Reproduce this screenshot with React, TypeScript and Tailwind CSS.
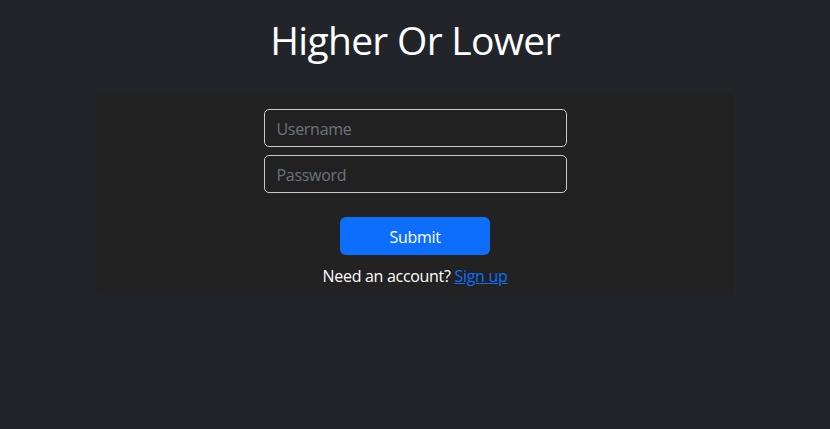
export default function App() {
  return (
    <div className="min-h-[429px] w-full bg-[#212529] text-white" style={{ fontFamily: '"Segoe UI", "Open Sans", "Noto Sans", sans-serif' }}>
      <h1 className="pt-[16px] text-center text-[39px] leading-[48px] font-normal tracking-[-0.7px]">Higher Or Lower</h1>
      <div className="mx-auto mt-[29px] w-[638px] rounded-[5px] bg-[#222222] px-4 pt-4 pb-[7px]">
        <div className="mx-auto flex w-[303px] flex-col gap-[8px]">
          <input
            placeholder="Username"
            className="h-[38px] w-full rounded-[5px] border border-[#c8cbce] bg-[#212121] px-3 pt-[2px] text-[16px] tracking-[-0.3px] text-white placeholder:text-[#6c757d] outline-none"
          />
          <input
            type="password"
            placeholder="Password"
            className="h-[38px] w-full rounded-[5px] border border-[#c8cbce] bg-[#212121] px-3 pt-[2px] text-[16px] tracking-[-0.3px] text-white placeholder:text-[#6c757d] outline-none"
          />
        </div>
        <div className="mt-[24px] flex justify-center">
          <button className="h-[38px] w-[150px] rounded-[6px] bg-[#0d6efd] pt-[2px] text-[16px] tracking-[-0.3px] text-white">Submit</button>
        </div>
        <p className="mt-[9px] text-center text-[16px] leading-[24px] tracking-[-0.3px]">
          Need an account? <a href="#" className="text-[#0d6efd] underline">Sign up</a>
        </p>
      </div>
    </div>
  );
}
